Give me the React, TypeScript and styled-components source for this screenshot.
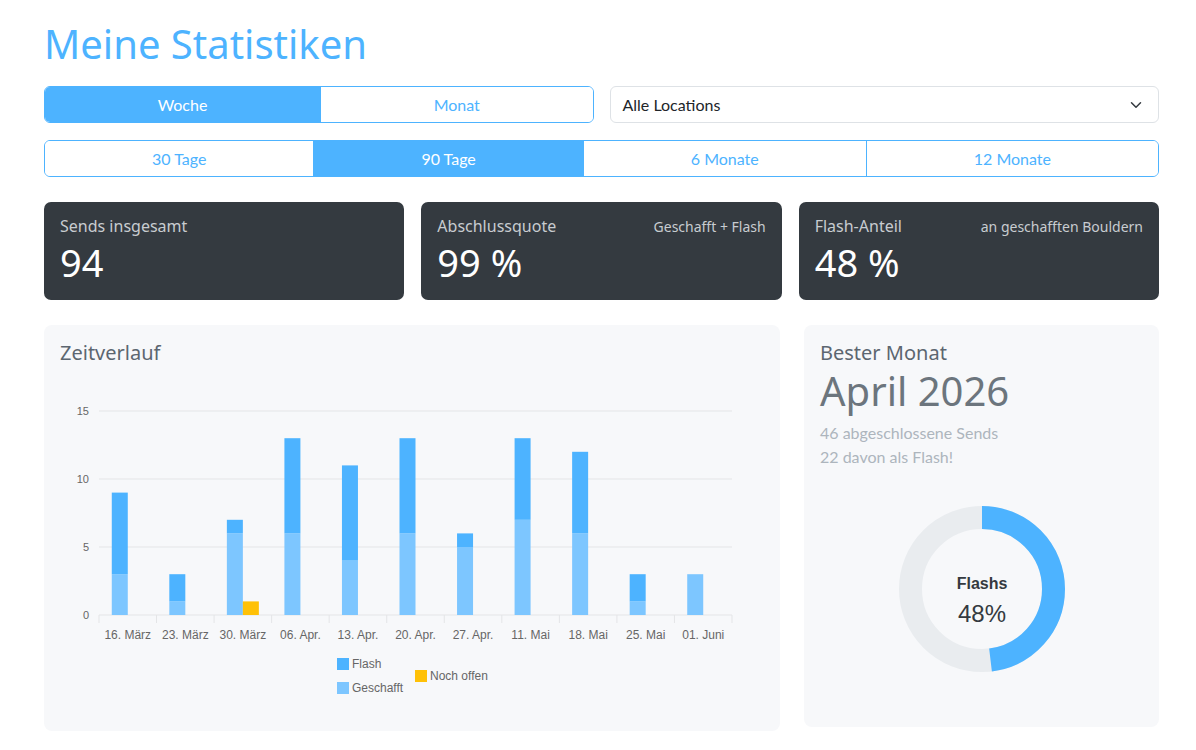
import React from 'react';
import styled, { createGlobalStyle } from 'styled-components';

const BLUE = '#4db3ff';
const BLUE_LIGHT = '#7dc6ff';
const YELLOW = '#ffc107';

const HEAD_FONT = "'Noto Sans', 'Open Sans', sans-serif";
const BODY_FONT = "Lato, 'Noto Sans', sans-serif";
const CHART_FONT = "'Liberation Sans', Arial, sans-serif";

const GlobalStyle = createGlobalStyle`
  html, body {
    margin: 0;
    background: #fff;
  }
  body {
    font-family: ${BODY_FONT};
    color: #212529;
  }
  * {
    box-sizing: border-box;
  }
`;

const Page = styled.main`
  width: 1159px;
  padding: 20px 0 20px 44px;
`;

const Title = styled.h1`
  font-family: ${HEAD_FONT};
  font-weight: 400;
  font-size: 40px;
  line-height: 48px;
  color: ${BLUE};
  margin: 0 0 18px;
`;

const ControlsRow = styled.div`
  display: grid;
  grid-template-columns: 1fr 1fr;
  gap: 16px;
  margin-bottom: 17px;
`;

const Segmented = styled.div`
  display: flex;
  border: 1px solid ${BLUE};
  border-radius: 6px;
  overflow: hidden;
`;

const SegButton = styled.button<{ $active?: boolean }>`
  flex: 1 1 auto;
  height: 35px;
  border: 0;
  border-left: 1px solid ${BLUE};
  background: ${(p) => (p.$active ? BLUE : '#fff')};
  color: ${(p) => (p.$active ? '#fff' : BLUE)};
  font-family: ${BODY_FONT};
  font-size: 16px;
  padding: 0 12px;
  cursor: pointer;

  &:first-child {
    border-left: 0;
  }
`;

const Select = styled.div`
  display: flex;
  align-items: center;
  justify-content: space-between;
  height: 37px;
  padding: 0 16px 0 12px;
  border: 1px solid #dee2e6;
  border-radius: 6px;
  font-size: 16px;
  color: #212529;
`;

const StatGrid = styled.div`
  display: grid;
  grid-template-columns: repeat(3, 1fr);
  gap: 17px;
  margin-top: 25px;
`;

const StatCard = styled.div`
  background: #343a40;
  border-radius: 7px;
  height: 98px;
  padding: 13px 16px;
  font-family: ${HEAD_FONT};
`;

const StatHead = styled.div`
  display: flex;
  justify-content: space-between;
  align-items: baseline;
`;

const StatLabel = styled.span`
  font-size: 16px;
  line-height: 22px;
  color: #c8ccd0;
`;

const StatNote = styled.span`
  font-size: 14px;
  color: #c8ccd0;
`;

const StatValue = styled.div`
  font-size: 38px;
  line-height: 46px;
  margin-top: 2px;
  color: #fff;
`;

const LowerGrid = styled.div`
  display: grid;
  grid-template-columns: 736px 355px;
  gap: 24px;
  align-items: start;
  margin-top: 25px;
`;

const Panel = styled.section<{ $height: number }>`
  background: #f7f8fa;
  border-radius: 8px;
  height: ${(p) => p.$height}px;
  padding: 16px;
`;

const PanelTitle = styled.h2`
  font-family: ${HEAD_FONT};
  font-weight: 400;
  font-size: 20px;
  line-height: 24px;
  color: #5c6670;
  margin: 0;
`;

const ChartSvg = styled.svg`
  display: block;
  margin-top: 8px;
  font-family: ${CHART_FONT};
`;

const BigMonth = styled.div`
  font-family: ${HEAD_FONT};
  font-size: 40px;
  line-height: 48px;
  color: #6c757d;
  margin: 2px 0 6px;
`;

const SubLine = styled.div`
  font-size: 16px;
  line-height: 24px;
  color: #adb5bd;
`;

const DonutWrap = styled.div`
  display: flex;
  justify-content: center;
  align-items: center;
  height: 240px;
`;

const DonutSvg = styled.svg`
  display: block;
  font-family: ${CHART_FONT};
`;

type Week = { label: string; done: number; flash: number; open: number };

const weeks: Week[] = [
  { label: '16. März', done: 3, flash: 6, open: 0 },
  { label: '23. März', done: 1, flash: 2, open: 0 },
  { label: '30. März', done: 6, flash: 1, open: 1 },
  { label: '06. Apr.', done: 6, flash: 7, open: 0 },
  { label: '13. Apr.', done: 4, flash: 7, open: 0 },
  { label: '20. Apr.', done: 6, flash: 7, open: 0 },
  { label: '27. Apr.', done: 5, flash: 1, open: 0 },
  { label: '11. Mai', done: 7, flash: 6, open: 0 },
  { label: '18. Mai', done: 6, flash: 6, open: 0 },
  { label: '25. Mai', done: 1, flash: 2, open: 0 },
  { label: '01. Juni', done: 3, flash: 0, open: 0 },
];

// plot geometry inside the chart svg
const PLOT_L = 39;
const PLOT_R = 672;
const BASE_Y = 242;
const UNIT = 13.6;
const BAR_W = 16;
const catW = (PLOT_R - PLOT_L) / weeks.length;
const yOf = (v: number) => BASE_Y - v * UNIT;

const TimelineChart = () => (
  <ChartSvg width={704} height={342} viewBox="0 0 704 342">
    {[0, 5, 10, 15].map((v) => (
      <g key={v}>
        <line x1={PLOT_L} x2={PLOT_R} y1={yOf(v)} y2={yOf(v)} stroke="#e4e5e7" strokeWidth={1} />
        <text x={29} y={yOf(v) + 4} fontSize={11} fill="#666" textAnchor="end">
          {v}
        </text>
      </g>
    ))}
    {weeks.map((_, i) => (
      <line
        key={`t${i}`}
        x1={PLOT_L + i * catW}
        x2={PLOT_L + i * catW}
        y1={BASE_Y}
        y2={BASE_Y + 8}
        stroke="#e4e5e7"
      />
    ))}
    <line x1={PLOT_R} x2={PLOT_R} y1={BASE_Y} y2={BASE_Y + 8} stroke="#e4e5e7" />
    {weeks.map((w, i) => {
      const c = PLOT_L + (i + 0.5) * catW;
      const x = c - BAR_W;
      return (
        <g key={w.label}>
          <rect x={x} y={yOf(w.done)} width={BAR_W} height={w.done * UNIT} fill={BLUE_LIGHT} />
          {w.flash > 0 && (
            <rect x={x} y={yOf(w.done + w.flash)} width={BAR_W} height={w.flash * UNIT} fill={BLUE} />
          )}
          {w.open > 0 && (
            <rect x={c} y={yOf(w.open)} width={BAR_W} height={w.open * UNIT} fill={YELLOW} />
          )}
          <text x={c} y={266} fontSize={12} fill="#666" textAnchor="middle">
            {w.label}
          </text>
        </g>
      );
    })}
    <g fontSize={12} fill="#666">
      <rect x={277} y={285} width={12} height={12} fill={BLUE} />
      <text x={292} y={295}>Flash</text>
      <rect x={277} y={309} width={12} height={12} fill={BLUE_LIGHT} />
      <text x={292} y={319}>Geschafft</text>
      <rect x={355} y={297} width={12} height={12} fill={YELLOW} />
      <text x={370} y={307}>Noch offen</text>
    </g>
  </ChartSvg>
);

const FlashDonut = ({ share }: { share: number }) => {
  const r = 71.5;
  const circ = 2 * Math.PI * r;
  return (
    <DonutSvg width={170} height={170} viewBox="0 0 170 170">
      <circle cx={85} cy={85} r={r} fill="none" stroke="#e9ecef" strokeWidth={23} />
      <circle
        cx={85}
        cy={85}
        r={r}
        fill="none"
        stroke={BLUE}
        strokeWidth={23}
        strokeDasharray={`${circ * share} ${circ}`}
        transform="rotate(-90 85 85)"
      />
      <text x={85} y={85} fontSize={16} fontWeight={700} fill="#343a40" textAnchor="middle">
        Flashs
      </text>
      <text x={85} y={118} fontSize={24} fill="#343a40" textAnchor="middle">
        {Math.round(share * 100)}%
      </text>
    </DonutSvg>
  );
};

const Chevron = () => (
  <svg width={12} height={12} viewBox="0 0 16 16">
    <path d="M2 5l6 6 6-6" fill="none" stroke="#343a40" strokeWidth={2} strokeLinecap="round" strokeLinejoin="round" />
  </svg>
);

const App = () => {
  return (
    <>
      <GlobalStyle />
      <Page>
        <Title>Meine Statistiken</Title>

        <ControlsRow>
          <Segmented>
            <SegButton $active>Woche</SegButton>
            <SegButton>Monat</SegButton>
          </Segmented>
          <Select>
            <span>Alle Locations</span>
            <Chevron />
          </Select>
        </ControlsRow>

        <Segmented>
          <SegButton>30 Tage</SegButton>
          <SegButton $active>90 Tage</SegButton>
          <SegButton>6 Monate</SegButton>
          <SegButton>12 Monate</SegButton>
        </Segmented>

        <StatGrid>
          <StatCard>
            <StatHead>
              <StatLabel>Sends insgesamt</StatLabel>
            </StatHead>
            <StatValue>94</StatValue>
          </StatCard>
          <StatCard>
            <StatHead>
              <StatLabel>Abschlussquote</StatLabel>
              <StatNote>Geschafft + Flash</StatNote>
            </StatHead>
            <StatValue>99 %</StatValue>
          </StatCard>
          <StatCard>
            <StatHead>
              <StatLabel>Flash-Anteil</StatLabel>
              <StatNote>an geschafften Bouldern</StatNote>
            </StatHead>
            <StatValue>48 %</StatValue>
          </StatCard>
        </StatGrid>

        <LowerGrid>
          <Panel $height={406}>
            <PanelTitle>Zeitverlauf</PanelTitle>
            <TimelineChart />
          </Panel>
          <Panel $height={402}>
            <PanelTitle>Bester Monat</PanelTitle>
            <BigMonth>April 2026</BigMonth>
            <SubLine>46 abgeschlossene Sends</SubLine>
            <SubLine>22 davon als Flash!</SubLine>
            <DonutWrap>
              <FlashDonut share={0.48} />
            </DonutWrap>
          </Panel>
        </LowerGrid>
      </Page>
    </>
  );
};

export default App;
